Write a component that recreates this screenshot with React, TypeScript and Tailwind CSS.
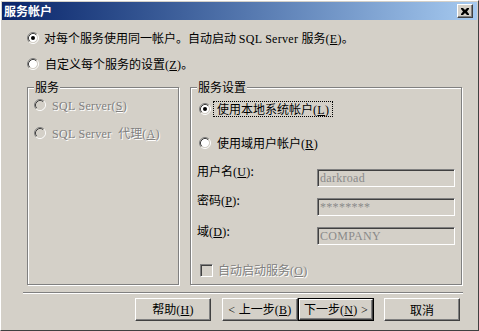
const Radio = ({ checked = false, disabled = false }: { checked?: boolean; disabled?: boolean }) => (
  <svg width="12" height="12" viewBox="0 0 12 12" className="shrink-0">
    <circle cx="6" cy="6" r="4.2" fill={disabled ? "#d4d0c8" : "#ffffff"} />
    <path d="M2.11 9.89 A5.5 5.5 0 0 1 9.89 2.11" fill="none" stroke="#808080" strokeWidth="1" />
    <path d="M9.89 2.11 A5.5 5.5 0 0 1 2.11 9.89" fill="none" stroke="#ffffff" strokeWidth="1" />
    <path d="M2.82 9.18 A4.5 4.5 0 0 1 9.18 2.82" fill="none" stroke="#404040" strokeWidth="1" />
    <path d="M9.18 2.82 A4.5 4.5 0 0 1 2.82 9.18" fill="none" stroke="#d4d0c8" strokeWidth="1" />
    {checked && <circle cx="6" cy="6" r="2" fill={disabled ? "#808080" : "#000000"} />}
  </svg>
);

// SimSun-like half-width latin text
const Latin = ({ children }: { children: React.ReactNode }) => (
  <span className="[font-family:'Liberation_Serif',serif] text-[12px] tracking-[0.3px]">{children}</span>
);

const Mn = ({ k }: { k: string }) => (
  <Latin>
    (<span className="underline underline-offset-1">{k}</span>)
  </Latin>
);

const Button = ({ children, isDefault = false }: { children: React.ReactNode; isDefault?: boolean }) => (
  <div className={isDefault ? "w-[76px] h-[23px] border border-black" : "w-[76px] h-[23px]"}>
    <div className="w-full h-full flex items-center justify-center border border-t-white border-l-white border-r-[#404040] border-b-[#404040] shadow-[inset_-1px_-1px_0_#808080]">
      <span className="whitespace-pre">{children}</span>
    </div>
  </div>
);

const Field = ({ value }: { value: string }) => (
  <div className="mt-[5px] w-[138px] h-[18px] flex items-center pl-[2px] border border-t-[#808080] border-l-[#808080] border-r-white border-b-white shadow-[inset_1px_1px_0_#404040,inset_-1px_-1px_0_#d4d0c8] text-[#8a8a8a]">
    <Latin>{value}</Latin>
  </div>
);

export default function App() {
  const off = "text-[#808080] [text-shadow:1px_1px_0_#ffffff]";
  return (
    <div className="w-[479px] h-[331px] bg-[#d4d0c8] border border-t-white border-l-white border-r-[#404040] border-b-[#404040] p-px flex flex-col text-[12px] leading-[16px] text-black [font-family:'Noto_Sans_CJK_SC',sans-serif] overflow-hidden">
      {/* title bar */}
      <div className="h-[18px] shrink-0 bg-linear-to-r from-[#0a246a] to-[#a6caf0] flex items-center justify-between pl-[2px] pr-[4px]">
        <span className="font-bold text-white leading-[14px]">服务帐户</span>
        <div className="w-[16px] h-[14px] flex items-center justify-center border border-t-white border-l-white border-r-[#404040] border-b-[#404040] shadow-[inset_-1px_-1px_0_#808080] bg-[#d4d0c8]">
          <svg width="8" height="7" viewBox="0 0 8 7">
            <path d="M0 0h2l2 2 2-2h2v1L6 3.5 8 6v1H6L4 5 2 7H0V6l2-2.5L0 1z" fill="#000" />
          </svg>
        </div>
      </div>

      <div className="flex-1 flex flex-col">
        <div className="mt-[10px] ml-[25px] h-[16px] flex items-center gap-[5px]">
          <Radio checked />
          <span className="whitespace-pre">
            对每个服务使用同一帐户。自动启动 <Latin>SQL Server </Latin>服务<Mn k="E" />。
          </span>
        </div>
        <div className="mt-[10px] ml-[25px] h-[16px] flex items-center gap-[6px]">
          <Radio />
          <span>
            自定义每个服务的设置<Mn k="Z" />。
          </span>
        </div>

        <div className="mt-[15px] ml-[25px] flex gap-[11px]">
          {/* 服务 */}
          <div className="w-[152px] h-[198px] flex flex-col border border-[#808080] shadow-[inset_1px_1px_0_#fff,1px_1px_0_#fff]">
            <span className="self-start ml-[6px] px-px -mt-[8px] h-[14px] leading-[14px] bg-[#d4d0c8]">服务</span>
            <div className={`mt-[3px] pl-[6px] h-[16px] flex items-center gap-[6px] ${off}`}>
              <Radio disabled />
              <span>
                <Latin>SQL Server</Latin>
                <Mn k="S" />
              </span>
            </div>
            <div className={`mt-[12px] pl-[6px] h-[16px] flex items-center gap-[6px] ${off}`}>
              <Radio disabled />
              <span className="whitespace-pre">
                <Latin>SQL Server  </Latin>代理<Mn k="A" />
              </span>
            </div>
          </div>

          {/* 服务设置 */}
          <div className="w-[272px] h-[198px] flex flex-col border border-[#808080] shadow-[inset_1px_1px_0_#fff,1px_1px_0_#fff]">
            <span className="self-start ml-[6px] px-px -mt-[8px] h-[14px] leading-[14px] bg-[#d4d0c8]">服务设置</span>
            <div className="mt-[7px] pl-[8px] h-[16px] flex items-center gap-[2px]">
              <Radio checked />
              <span className="h-[16px] leading-[14px] px-[3px] border border-dotted border-black">
                使用本地系统帐户<Mn k="L" />
              </span>
            </div>
            <div className="mt-[18px] pl-[8px] h-[16px] flex items-center gap-[6px]">
              <Radio />
              <span>
                使用域用户帐户<Mn k="R" />
              </span>
            </div>

            <div className="mt-[13px] pl-[6px] flex items-start">
              <span className="w-[120px] h-[14px] leading-[14px]">
                用户名<Mn k="U" />:
              </span>
              <Field value="darkroad" />
            </div>
            <div className="mt-[6px] pl-[6px] flex items-start">
              <span className="w-[120px] h-[14px] leading-[14px]">
                密码<Mn k="P" />:
              </span>
              <Field value="********" />
            </div>
            <div className="mt-[6px] pl-[6px] flex items-start">
              <span className="w-[120px] h-[14px] leading-[14px] mt-[2px]">
                域<Mn k="D" />:
              </span>
              <Field value="COMPANY" />
            </div>

            <div className={`mt-[18px] pl-[9px] h-[14px] flex items-center gap-[5px] ${off}`}>
              <div className="w-[13px] h-[13px] shrink-0 border border-t-[#808080] border-l-[#808080] border-r-white border-b-white shadow-[inset_1px_1px_0_#404040,inset_-1px_-1px_0_#d4d0c8]" />
              <span>
                自动启动服务<Mn k="O" />
              </span>
            </div>
          </div>
        </div>

        <div className="mt-[7px] ml-[21px] w-[440px] h-[2px] border-t border-t-[#808080] border-b border-b-white" />

        <div className="mt-[4px] pl-[133px] flex">
          <Button>
            帮助<Mn k="H" />
          </Button>
          <div className="ml-[11px] flex">
            <Button>
              <Latin>{"< "}</Latin>上一步<Mn k="B" />
            </Button>
            <Button isDefault>
              下一步<Mn k="N" />
              <Latin>{" >"}</Latin>
            </Button>
          </div>
          <div className="ml-[10px]">
            <Button>取消</Button>
          </div>
        </div>
      </div>
    </div>
  );
}
